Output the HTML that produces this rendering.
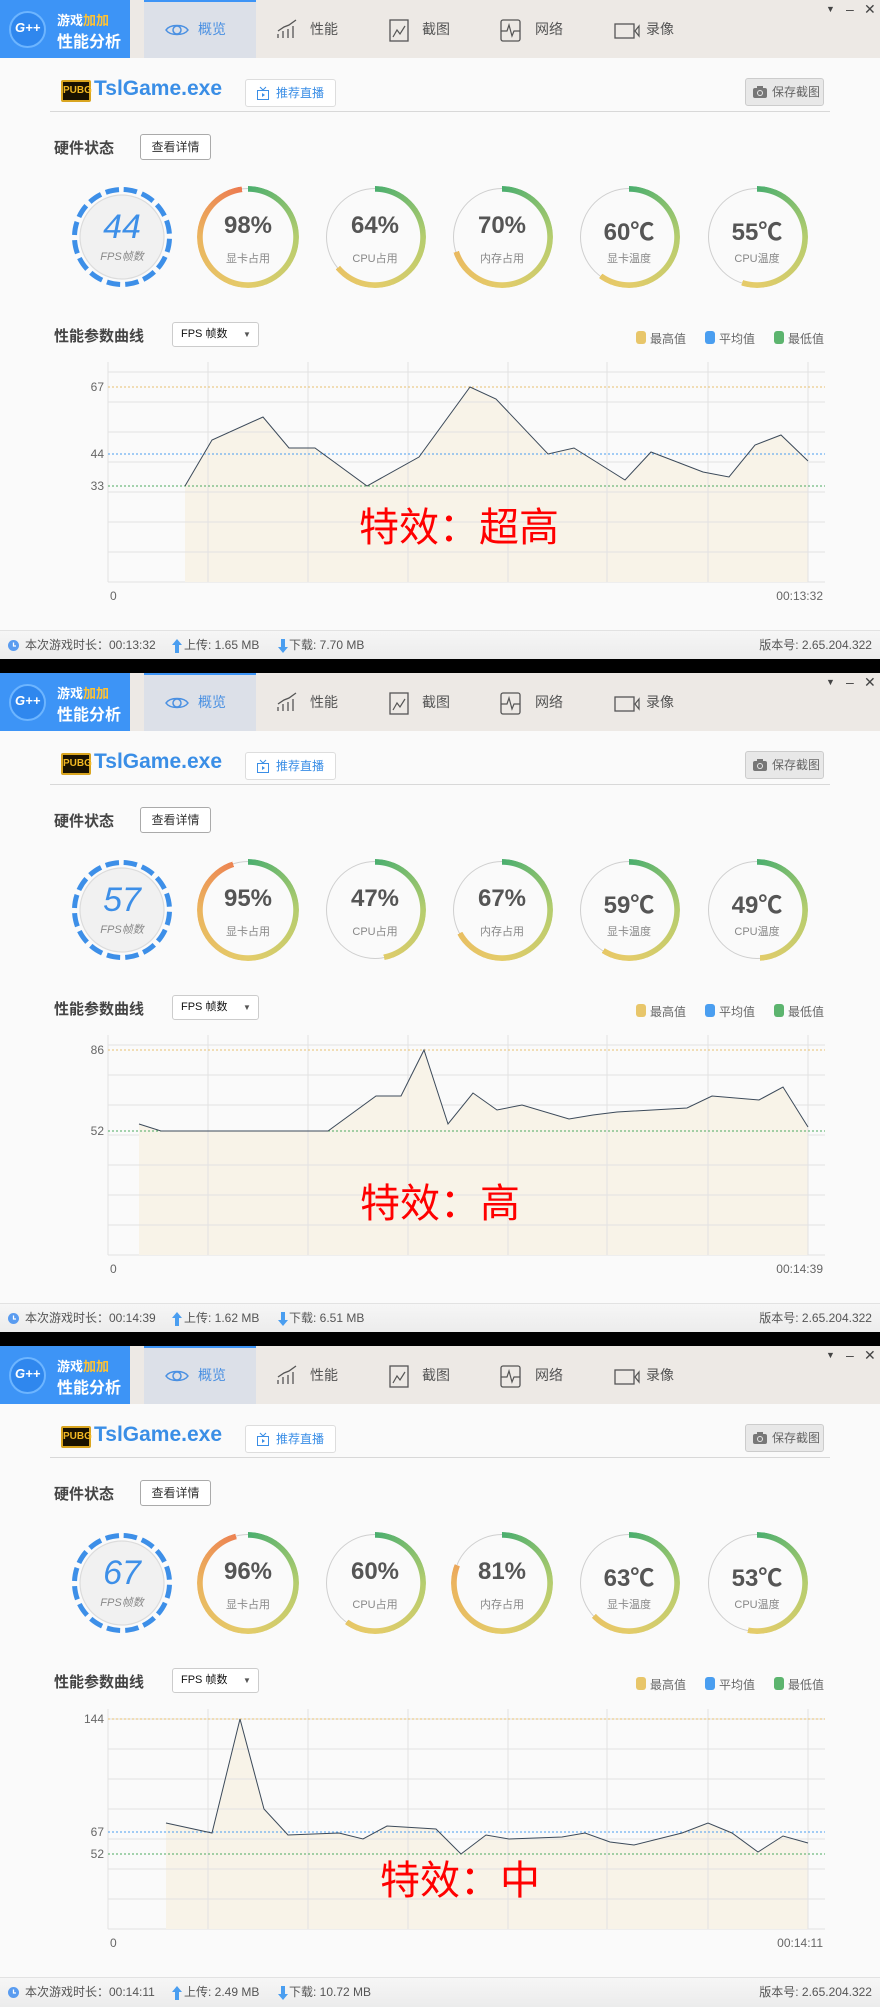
<!DOCTYPE html>
<html><head><meta charset="utf-8">
<style>
*{margin:0;padding:0;box-sizing:border-box}
body{width:880px;height:2007px;background:#000;font-family:"Liberation Sans","Noto Sans CJK SC",sans-serif;position:relative;overflow:hidden}
.p{position:absolute;left:0;width:880px;height:659px;background:#fafafa;overflow:hidden}
.a{position:absolute;white-space:nowrap}
.hdr{position:absolute;left:0;top:0;width:880px;height:58px;background:#ede9e5}
.logo{position:absolute;left:0;top:0;width:130px;height:58px;background:#3d94f6}
.tab{position:absolute;top:0;height:58px;font-size:14px;color:#555;line-height:58px}
.act{left:144px;width:112px;background:#dce0e8;border-top:2px solid #3d94f6}
.ring{position:absolute;top:186px;width:102px;height:102px}
.ring .g{position:absolute;left:2px;top:2px;width:98px;height:98px;border-radius:50%;border:1.5px solid #cfcfcf}
.ring .c{position:absolute;left:0;top:0;width:102px;height:102px;border-radius:50%;-webkit-mask:radial-gradient(circle closest-side,transparent calc(100% - 6px),#000 calc(100% - 5.5px));mask:radial-gradient(circle closest-side,transparent calc(100% - 6px),#000 calc(100% - 5.5px))}
.ring .v{position:absolute;left:0;width:102px;top:26px;text-align:center;font-size:24px;font-weight:bold;color:#555}
.ring .l{position:absolute;left:0;width:102px;top:64px;text-align:center;font-size:11px;color:#888}
.h2{font-size:15px;font-weight:bold;color:#444}
.btn{position:absolute;border:1px solid #aaa;border-radius:3px;background:#fff;font-size:12px;color:#333;text-align:center}
.lg{position:absolute;top:331px;width:10px;height:13px;border-radius:3px}
.lt{position:absolute;top:330px;font-size:12px;color:#666}
.yl{position:absolute;font-size:12px;color:#666;width:40px;text-align:right;left:64px}
.ft{position:absolute;left:0;top:630px;width:880px;height:29px;background:linear-gradient(#f6f6f6,#ececec);border-top:1px solid #e2e2e2;font-size:12px;color:#555;line-height:29px}
.red{position:absolute;font-size:40px;color:#ff0000;line-height:40px;font-family:"Noto Sans CJK SC",sans-serif}
</style></head><body>

<!-- PANEL TEMPLATE 1 -->
<div class="p" style="top:0">
 <div class="hdr">
  <div class="logo">
   <div class="a" style="left:9px;top:11px;width:37px;height:37px;border-radius:50%;background:#2f87ee;border:2px solid #6db5ff"></div>
   <div class="a" style="left:15px;top:20px;font-size:13px;font-weight:bold;font-style:italic;color:#fff">G++</div>
   <div class="a" style="left:57px;top:10px;font-size:13px;font-weight:bold;color:#fff">游戏<span style="color:#ffc233">加加</span></div>
   <div class="a" style="left:57px;top:28px;font-size:16px;font-weight:bold;color:#fff">性能分析</div>
  </div>
  <div class="tab act"><svg class="a" style="left:21px;top:20px" width="24" height="16" viewBox="0 0 24 16"><path d="M1 8C5 2 19 2 23 8C19 14 5 14 1 8Z" fill="none" stroke="#4a90e2" stroke-width="1.5"/><circle cx="12" cy="8" r="4" fill="none" stroke="#4a90e2" stroke-width="1.5"/></svg><span class="a" style="left:54px;top:-2px;color:#4a90e2">概览</span></div>
  <div class="tab" style="left:276px;width:60px"><svg class="a" style="left:0;top:18px" width="24" height="22"><path d="M2 20v-4M7 20v-7M12 20v-9M17 20v-12M2 13 8 9 13 7 20 2" fill="none" stroke="#555" stroke-width="1.3"/></svg><span class="a" style="left:34px">性能</span></div>
  <div class="tab" style="left:389px;width:60px"><svg class="a" style="left:0;top:19px" width="22" height="24"><rect x="1" y="1" width="18" height="21" fill="none" stroke="#555" stroke-width="1.3"/><path d="M4 18 8 11 11 15 16 7" fill="none" stroke="#555" stroke-width="1.2"/></svg><span class="a" style="left:33px">截图</span></div>
  <div class="tab" style="left:500px;width:60px"><svg class="a" style="left:0;top:19px" width="22" height="24"><rect x="1" y="1" width="19" height="21" rx="2" fill="none" stroke="#555" stroke-width="1.3"/><path d="M1 12h6l2-6 3 11 2-5h6" fill="none" stroke="#555" stroke-width="1.2"/></svg><span class="a" style="left:35px">网络</span></div>
  <div class="tab" style="left:614px;width:60px"><svg class="a" style="left:0;top:23px" width="28" height="16"><rect x="1" y="1" width="19" height="14" fill="none" stroke="#555" stroke-width="1.3"/><path d="M25 3 21 8 25 13Z" fill="none" stroke="#555" stroke-width="1.2"/></svg><span class="a" style="left:32px">录像</span></div>
  <div class="a" style="left:826px;top:4px;font-size:9px;color:#444">▼</div>
  <div class="a" style="left:846px;top:1px;font-size:14px;color:#444">–</div>
  <div class="a" style="left:864px;top:1px;font-size:14px;color:#444">✕</div>
 </div>
 <div class="a" style="left:61px;top:80px;width:30px;height:22px;background:#1a1200;border:2px solid #d9a520;border-radius:2px;color:#f2b822;font-size:10px;font-weight:bold;line-height:18px;text-align:center">PUBG</div>
 <div class="a" style="left:94px;top:77px;font-size:21px;font-weight:bold;color:#3a8ee6">TslGame.exe</div>
 <div class="btn" style="left:245px;top:79px;width:91px;height:28px;border-color:#ddd;line-height:26px;color:#3a8ee6;text-align:left;padding-left:30px">推荐直播</div>
 <svg class="a" style="left:256px;top:86px" width="14" height="14"><path d="M4 1 7 4 10 1" fill="none" stroke="#3a8ee6"/><rect x="1.5" y="4.5" width="11" height="9" fill="none" stroke="#3a8ee6"/><path d="M6 7v4l3-2z" fill="#3a8ee6"/></svg>
 <div class="btn" style="left:745px;top:78px;width:79px;height:28px;background:#e8e8e8;border-color:#ccc;line-height:26px;color:#666;text-align:left;padding-left:26px">保存截图</div>
 <svg class="a" style="left:753px;top:86px" width="14" height="12"><rect x="0" y="2" width="14" height="10" rx="2" fill="#777"/><rect x="4" y="0" width="6" height="3" fill="#777"/><circle cx="7" cy="7" r="3" fill="#e8e8e8"/><circle cx="7" cy="7" r="2" fill="#777"/></svg>
 <div class="a" style="left:50px;top:111px;width:780px;height:1px;background:#d8d8d8"></div>
 <div class="a h2" style="left:54px;top:137px">硬件状态</div>
 <div class="btn" style="left:140px;top:134px;width:71px;height:26px;line-height:24px">查看详情</div>

 <div class="ring" style="left:71px"><svg width="102" height="102" style="position:absolute;left:0;top:0"><circle cx="51" cy="51" r="42" fill="#f1f1f1" stroke="#dcdcdc" stroke-width="1.2"/><circle cx="51" cy="51" r="47.5" fill="none" stroke="#3d8fe8" stroke-width="5" stroke-dasharray="13.5 5.15" transform="rotate(-88 51 51)"/></svg><div class="v" style="top:22px;font-size:34px;font-weight:normal;font-style:italic;color:#3d8fe8">44</div><div class="l" style="top:62px;font-style:italic">FPS帧数</div></div>
 <div class="ring" style="left:197px"><div class="g"></div><div class="c" style="background:conic-gradient(#4aae6e 0%,#b5cd6e 25%,#e4cc6a 50%,#ebb45e 75%,#ec7a50 98%,transparent 98%)"></div><div class="v">98%</div><div class="l">显卡占用</div></div>
 <div class="ring" style="left:324px"><div class="g"></div><div class="c" style="background:conic-gradient(#4aae6e 0%,#b5cd6e 25%,#e4cc6a 50%,#e7c264 64%,transparent 64%)"></div><div class="v">64%</div><div class="l">CPU占用</div></div>
 <div class="ring" style="left:451px"><div class="g"></div><div class="c" style="background:conic-gradient(#4aae6e 0%,#b5cd6e 25%,#e4cc6a 50%,#e9b960 70%,transparent 70%)"></div><div class="v">70%</div><div class="l">内存占用</div></div>
 <div class="ring" style="left:578px"><div class="g"></div><div class="c" style="background:conic-gradient(#4aae6e 0%,#b5cd6e 25%,#e4cc6a 50%,#e6c666 60%,transparent 60%)"></div><div class="v">60℃</div><div class="l">显卡温度</div></div>
 <div class="ring" style="left:706px"><div class="g"></div><div class="c" style="background:conic-gradient(#4aae6e 0%,#b5cd6e 25%,#e4cc6a 50%,#e5ca68 55%,transparent 55%)"></div><div class="v">55℃</div><div class="l">CPU温度</div></div>

 <div class="a h2" style="left:54px;top:325px">性能参数曲线</div>
 <div class="btn" style="left:172px;top:322px;width:87px;height:25px;border-color:#ccc;line-height:23px;text-align:left;padding-left:8px;color:#111;font-size:11px">FPS 帧数<span style="position:absolute;left:70px;font-size:8px;color:#555">▼</span></div>
 <div class="lg" style="left:636px;background:#e8c66a"></div><div class="lt" style="left:650px">最高值</div>
 <div class="lg" style="left:705px;background:#4a9ef0"></div><div class="lt" style="left:719px">平均值</div>
 <div class="lg" style="left:774px;background:#5cb46e"></div><div class="lt" style="left:788px">最低值</div>

 <svg class="a" style="left:0;top:0" width="880" height="630">
  <g stroke="#e2e2e2" stroke-width="1"><path d="M108 372H825M108 402H825M108 432H825M108 462H825M108 492H825M108 522H825M108 552H825M108 582H825M108 362V582M208 362V582M308 362V582M408 362V582M508 362V582M607 362V582M708 362V582M808 362V582"/></g>
  <polygon fill="#f8f3e8" points="185,486 212,440 263,417 289,448 315,448 367,486 419,457 470,387 496,399 548,454 574,448 625,480 651,452 703,472 729,477 755,445 781,435 808,461 808,582 185,582"/>
  <g stroke="#e2e2e2"><path d="M208 362V582M308 362V582M408 362V582M508 362V582M607 362V582M708 362V582M808 362V582M108 402H825M108 432H825M108 492H825M108 522H825M108 552H825"/></g>
  <path d="M108 387H825" stroke="#e8c070" stroke-dasharray="2 2"/>
  <path d="M108 454H825" stroke="#4a9ef0" stroke-dasharray="2 2"/>
  <path d="M108 486H825" stroke="#4caa60" stroke-dasharray="2 2"/>
  <polyline fill="none" stroke="#3c4a5a" stroke-width="1" points="185,486 212,440 263,417 289,448 315,448 367,486 419,457 470,387 496,399 548,454 574,448 625,480 651,452 703,472 729,477 755,445 781,435 808,461"/>
 </svg>
 <div class="yl" style="top:380px">67</div><div class="yl" style="top:447px">44</div><div class="yl" style="top:479px">33</div>
 <div class="a" style="left:110px;top:589px;font-size:12px;color:#666">0</div>
 <div class="a" style="left:773px;top:589px;width:50px;text-align:right;font-size:12px;color:#666">00:13:32</div>
 <div class="red" style="left:359px;top:504px">特效：超高</div>
 <div class="ft">
  <svg class="a" style="left:8px;top:9px" width="11" height="11"><circle cx="5.5" cy="5.5" r="5.5" fill="#5a9cf0"/><path d="M5.5 2.5V6H8" stroke="#fff" fill="none" stroke-width="1.3"/></svg>
  <span class="a" style="left:25px">本次游戏时长：00:13:32</span>
  <svg class="a" style="left:172px;top:8px" width="10" height="14"><path d="M5 0 10 6H7V14H3V6H0Z" fill="#4a9ef0"/></svg>
  <span class="a" style="left:184px">上传: 1.65 MB</span>
  <svg class="a" style="left:278px;top:8px" width="10" height="14"><path d="M5 14 10 8H7V0H3V8H0Z" fill="#4a9ef0"/></svg>
  <span class="a" style="left:289px">下载: 7.70 MB</span>
  <span class="a" style="right:8px">版本号: 2.65.204.322</span>
 </div>
</div>

<!-- PANEL 2 -->
<div class="p" style="top:673px">
 <div class="hdr">
  <div class="logo">
   <div class="a" style="left:9px;top:11px;width:37px;height:37px;border-radius:50%;background:#2f87ee;border:2px solid #6db5ff"></div>
   <div class="a" style="left:15px;top:20px;font-size:13px;font-weight:bold;font-style:italic;color:#fff">G++</div>
   <div class="a" style="left:57px;top:10px;font-size:13px;font-weight:bold;color:#fff">游戏<span style="color:#ffc233">加加</span></div>
   <div class="a" style="left:57px;top:28px;font-size:16px;font-weight:bold;color:#fff">性能分析</div>
  </div>
  <div class="tab act"><svg class="a" style="left:21px;top:20px" width="24" height="16" viewBox="0 0 24 16"><path d="M1 8C5 2 19 2 23 8C19 14 5 14 1 8Z" fill="none" stroke="#4a90e2" stroke-width="1.5"/><circle cx="12" cy="8" r="4" fill="none" stroke="#4a90e2" stroke-width="1.5"/></svg><span class="a" style="left:54px;top:-2px;color:#4a90e2">概览</span></div>
  <div class="tab" style="left:276px;width:60px"><svg class="a" style="left:0;top:18px" width="24" height="22"><path d="M2 20v-4M7 20v-7M12 20v-9M17 20v-12M2 13 8 9 13 7 20 2" fill="none" stroke="#555" stroke-width="1.3"/></svg><span class="a" style="left:34px">性能</span></div>
  <div class="tab" style="left:389px;width:60px"><svg class="a" style="left:0;top:19px" width="22" height="24"><rect x="1" y="1" width="18" height="21" fill="none" stroke="#555" stroke-width="1.3"/><path d="M4 18 8 11 11 15 16 7" fill="none" stroke="#555" stroke-width="1.2"/></svg><span class="a" style="left:33px">截图</span></div>
  <div class="tab" style="left:500px;width:60px"><svg class="a" style="left:0;top:19px" width="22" height="24"><rect x="1" y="1" width="19" height="21" rx="2" fill="none" stroke="#555" stroke-width="1.3"/><path d="M1 12h6l2-6 3 11 2-5h6" fill="none" stroke="#555" stroke-width="1.2"/></svg><span class="a" style="left:35px">网络</span></div>
  <div class="tab" style="left:614px;width:60px"><svg class="a" style="left:0;top:23px" width="28" height="16"><rect x="1" y="1" width="19" height="14" fill="none" stroke="#555" stroke-width="1.3"/><path d="M25 3 21 8 25 13Z" fill="none" stroke="#555" stroke-width="1.2"/></svg><span class="a" style="left:32px">录像</span></div>
  <div class="a" style="left:826px;top:4px;font-size:9px;color:#444">▼</div>
  <div class="a" style="left:846px;top:1px;font-size:14px;color:#444">–</div>
  <div class="a" style="left:864px;top:1px;font-size:14px;color:#444">✕</div>
 </div>
 <div class="a" style="left:61px;top:80px;width:30px;height:22px;background:#1a1200;border:2px solid #d9a520;border-radius:2px;color:#f2b822;font-size:10px;font-weight:bold;line-height:18px;text-align:center">PUBG</div>
 <div class="a" style="left:94px;top:77px;font-size:21px;font-weight:bold;color:#3a8ee6">TslGame.exe</div>
 <div class="btn" style="left:245px;top:79px;width:91px;height:28px;border-color:#ddd;line-height:26px;color:#3a8ee6;text-align:left;padding-left:30px">推荐直播</div>
 <svg class="a" style="left:256px;top:86px" width="14" height="14"><path d="M4 1 7 4 10 1" fill="none" stroke="#3a8ee6"/><rect x="1.5" y="4.5" width="11" height="9" fill="none" stroke="#3a8ee6"/><path d="M6 7v4l3-2z" fill="#3a8ee6"/></svg>
 <div class="btn" style="left:745px;top:78px;width:79px;height:28px;background:#e8e8e8;border-color:#ccc;line-height:26px;color:#666;text-align:left;padding-left:26px">保存截图</div>
 <svg class="a" style="left:753px;top:86px" width="14" height="12"><rect x="0" y="2" width="14" height="10" rx="2" fill="#777"/><rect x="4" y="0" width="6" height="3" fill="#777"/><circle cx="7" cy="7" r="3" fill="#e8e8e8"/><circle cx="7" cy="7" r="2" fill="#777"/></svg>
 <div class="a" style="left:50px;top:111px;width:780px;height:1px;background:#d8d8d8"></div>
 <div class="a h2" style="left:54px;top:137px">硬件状态</div>
 <div class="btn" style="left:140px;top:134px;width:71px;height:26px;line-height:24px">查看详情</div>

 <div class="ring" style="left:71px"><svg width="102" height="102" style="position:absolute;left:0;top:0"><circle cx="51" cy="51" r="42" fill="#f1f1f1" stroke="#dcdcdc" stroke-width="1.2"/><circle cx="51" cy="51" r="47.5" fill="none" stroke="#3d8fe8" stroke-width="5" stroke-dasharray="13.5 5.15" transform="rotate(-88 51 51)"/></svg><div class="v" style="top:22px;font-size:34px;font-weight:normal;font-style:italic;color:#3d8fe8">57</div><div class="l" style="top:62px;font-style:italic">FPS帧数</div></div>
 <div class="ring" style="left:197px"><div class="g"></div><div class="c" style="background:conic-gradient(#4aae6e 0%,#b5cd6e 25%,#e4cc6a 50%,#ebb45e 75%,#ec8452 95%,transparent 95%)"></div><div class="v">95%</div><div class="l">显卡占用</div></div>
 <div class="ring" style="left:324px"><div class="g"></div><div class="c" style="background:conic-gradient(#4aae6e 0%,#b5cd6e 25%,#e0cc6a 47%,transparent 47%)"></div><div class="v">47%</div><div class="l">CPU占用</div></div>
 <div class="ring" style="left:451px"><div class="g"></div><div class="c" style="background:conic-gradient(#4aae6e 0%,#b5cd6e 25%,#e4cc6a 50%,#e8be62 67%,transparent 67%)"></div><div class="v">67%</div><div class="l">内存占用</div></div>
 <div class="ring" style="left:578px"><div class="g"></div><div class="c" style="background:conic-gradient(#4aae6e 0%,#b5cd6e 25%,#e4cc6a 50%,#e6c766 59%,transparent 59%)"></div><div class="v">59℃</div><div class="l">显卡温度</div></div>
 <div class="ring" style="left:706px"><div class="g"></div><div class="c" style="background:conic-gradient(#4aae6e 0%,#b5cd6e 25%,#e2cc6a 49%,transparent 49%)"></div><div class="v">49℃</div><div class="l">CPU温度</div></div>

 <div class="a h2" style="left:54px;top:325px">性能参数曲线</div>
 <div class="btn" style="left:172px;top:322px;width:87px;height:25px;border-color:#ccc;line-height:23px;text-align:left;padding-left:8px;color:#111;font-size:11px">FPS 帧数<span style="position:absolute;left:70px;font-size:8px;color:#555">▼</span></div>
 <div class="lg" style="left:636px;background:#e8c66a"></div><div class="lt" style="left:650px">最高值</div>
 <div class="lg" style="left:705px;background:#4a9ef0"></div><div class="lt" style="left:719px">平均值</div>
 <div class="lg" style="left:774px;background:#5cb46e"></div><div class="lt" style="left:788px">最低值</div>

 <svg class="a" style="left:0;top:0" width="880" height="630">
  <g stroke="#e2e2e2" stroke-width="1"><path d="M108 372H825M108 402H825M108 432H825M108 462H825M108 492H825M108 522H825M108 552H825M108 582H825M108 362V582M208 362V582M308 362V582M408 362V582M508 362V582M607 362V582M708 362V582M808 362V582"/></g>
  <polygon fill="#f8f3e8" points="139,451 161,458 328,458 376,423 401,423 424,377 448,451 473,420 497,437 522,432 569,446 593,442 617,439 687,435 712,423 759,427 783,414 808,454 808,582 139,582"/>
  <g stroke="#e2e2e2"><path d="M208 362V582M308 362V582M408 362V582M508 362V582M607 362V582M708 362V582M808 362V582M108 492H825M108 522H825M108 552H825"/></g>
  <path d="M108 377H825" stroke="#e8c070" stroke-dasharray="2 2"/>
  <path d="M108 458H825" stroke="#4caa60" stroke-dasharray="2 2"/>
  <polyline fill="none" stroke="#3c4a5a" stroke-width="1" points="139,451 161,458 328,458 376,423 401,423 424,377 448,451 473,420 497,437 522,432 569,446 593,442 617,439 687,435 712,423 759,427 783,414 808,454"/>
 </svg>
 <div class="yl" style="top:370px">86</div><div class="yl" style="top:451px">52</div>
 <div class="a" style="left:110px;top:589px;font-size:12px;color:#666">0</div>
 <div class="a" style="left:773px;top:589px;width:50px;text-align:right;font-size:12px;color:#666">00:14:39</div>
 <div class="red" style="left:360px;top:507px">特效：高</div>
 <div class="ft">
  <svg class="a" style="left:8px;top:9px" width="11" height="11"><circle cx="5.5" cy="5.5" r="5.5" fill="#5a9cf0"/><path d="M5.5 2.5V6H8" stroke="#fff" fill="none" stroke-width="1.3"/></svg>
  <span class="a" style="left:25px">本次游戏时长：00:14:39</span>
  <svg class="a" style="left:172px;top:8px" width="10" height="14"><path d="M5 0 10 6H7V14H3V6H0Z" fill="#4a9ef0"/></svg>
  <span class="a" style="left:184px">上传: 1.62 MB</span>
  <svg class="a" style="left:278px;top:8px" width="10" height="14"><path d="M5 14 10 8H7V0H3V8H0Z" fill="#4a9ef0"/></svg>
  <span class="a" style="left:289px">下载: 6.51 MB</span>
  <span class="a" style="right:8px">版本号: 2.65.204.322</span>
 </div>
</div>

<!-- PANEL 3 -->
<div class="p" style="top:1346px;height:661px">
 <div class="hdr">
  <div class="logo">
   <div class="a" style="left:9px;top:11px;width:37px;height:37px;border-radius:50%;background:#2f87ee;border:2px solid #6db5ff"></div>
   <div class="a" style="left:15px;top:20px;font-size:13px;font-weight:bold;font-style:italic;color:#fff">G++</div>
   <div class="a" style="left:57px;top:10px;font-size:13px;font-weight:bold;color:#fff">游戏<span style="color:#ffc233">加加</span></div>
   <div class="a" style="left:57px;top:28px;font-size:16px;font-weight:bold;color:#fff">性能分析</div>
  </div>
  <div class="tab act"><svg class="a" style="left:21px;top:20px" width="24" height="16" viewBox="0 0 24 16"><path d="M1 8C5 2 19 2 23 8C19 14 5 14 1 8Z" fill="none" stroke="#4a90e2" stroke-width="1.5"/><circle cx="12" cy="8" r="4" fill="none" stroke="#4a90e2" stroke-width="1.5"/></svg><span class="a" style="left:54px;top:-2px;color:#4a90e2">概览</span></div>
  <div class="tab" style="left:276px;width:60px"><svg class="a" style="left:0;top:18px" width="24" height="22"><path d="M2 20v-4M7 20v-7M12 20v-9M17 20v-12M2 13 8 9 13 7 20 2" fill="none" stroke="#555" stroke-width="1.3"/></svg><span class="a" style="left:34px">性能</span></div>
  <div class="tab" style="left:389px;width:60px"><svg class="a" style="left:0;top:19px" width="22" height="24"><rect x="1" y="1" width="18" height="21" fill="none" stroke="#555" stroke-width="1.3"/><path d="M4 18 8 11 11 15 16 7" fill="none" stroke="#555" stroke-width="1.2"/></svg><span class="a" style="left:33px">截图</span></div>
  <div class="tab" style="left:500px;width:60px"><svg class="a" style="left:0;top:19px" width="22" height="24"><rect x="1" y="1" width="19" height="21" rx="2" fill="none" stroke="#555" stroke-width="1.3"/><path d="M1 12h6l2-6 3 11 2-5h6" fill="none" stroke="#555" stroke-width="1.2"/></svg><span class="a" style="left:35px">网络</span></div>
  <div class="tab" style="left:614px;width:60px"><svg class="a" style="left:0;top:23px" width="28" height="16"><rect x="1" y="1" width="19" height="14" fill="none" stroke="#555" stroke-width="1.3"/><path d="M25 3 21 8 25 13Z" fill="none" stroke="#555" stroke-width="1.2"/></svg><span class="a" style="left:32px">录像</span></div>
  <div class="a" style="left:826px;top:4px;font-size:9px;color:#444">▼</div>
  <div class="a" style="left:846px;top:1px;font-size:14px;color:#444">–</div>
  <div class="a" style="left:864px;top:1px;font-size:14px;color:#444">✕</div>
 </div>
 <div class="a" style="left:61px;top:80px;width:30px;height:22px;background:#1a1200;border:2px solid #d9a520;border-radius:2px;color:#f2b822;font-size:10px;font-weight:bold;line-height:18px;text-align:center">PUBG</div>
 <div class="a" style="left:94px;top:77px;font-size:21px;font-weight:bold;color:#3a8ee6">TslGame.exe</div>
 <div class="btn" style="left:245px;top:79px;width:91px;height:28px;border-color:#ddd;line-height:26px;color:#3a8ee6;text-align:left;padding-left:30px">推荐直播</div>
 <svg class="a" style="left:256px;top:86px" width="14" height="14"><path d="M4 1 7 4 10 1" fill="none" stroke="#3a8ee6"/><rect x="1.5" y="4.5" width="11" height="9" fill="none" stroke="#3a8ee6"/><path d="M6 7v4l3-2z" fill="#3a8ee6"/></svg>
 <div class="btn" style="left:745px;top:78px;width:79px;height:28px;background:#e8e8e8;border-color:#ccc;line-height:26px;color:#666;text-align:left;padding-left:26px">保存截图</div>
 <svg class="a" style="left:753px;top:86px" width="14" height="12"><rect x="0" y="2" width="14" height="10" rx="2" fill="#777"/><rect x="4" y="0" width="6" height="3" fill="#777"/><circle cx="7" cy="7" r="3" fill="#e8e8e8"/><circle cx="7" cy="7" r="2" fill="#777"/></svg>
 <div class="a" style="left:50px;top:111px;width:780px;height:1px;background:#d8d8d8"></div>
 <div class="a h2" style="left:54px;top:137px">硬件状态</div>
 <div class="btn" style="left:140px;top:134px;width:71px;height:26px;line-height:24px">查看详情</div>

 <div class="ring" style="left:71px"><svg width="102" height="102" style="position:absolute;left:0;top:0"><circle cx="51" cy="51" r="42" fill="#f1f1f1" stroke="#dcdcdc" stroke-width="1.2"/><circle cx="51" cy="51" r="47.5" fill="none" stroke="#3d8fe8" stroke-width="5" stroke-dasharray="13.5 5.15" transform="rotate(-88 51 51)"/></svg><div class="v" style="top:22px;font-size:34px;font-weight:normal;font-style:italic;color:#3d8fe8">67</div><div class="l" style="top:62px;font-style:italic">FPS帧数</div></div>
 <div class="ring" style="left:197px"><div class="g"></div><div class="c" style="background:conic-gradient(#4aae6e 0%,#b5cd6e 25%,#e4cc6a 50%,#ebb45e 75%,#ec8252 96%,transparent 96%)"></div><div class="v">96%</div><div class="l">显卡占用</div></div>
 <div class="ring" style="left:324px"><div class="g"></div><div class="c" style="background:conic-gradient(#4aae6e 0%,#b5cd6e 25%,#e4cc6a 50%,#e6c666 60%,transparent 60%)"></div><div class="v">60%</div><div class="l">CPU占用</div></div>
 <div class="ring" style="left:451px"><div class="g"></div><div class="c" style="background:conic-gradient(#4aae6e 0%,#b5cd6e 25%,#e4cc6a 50%,#ebb45e 75%,#eba65a 81%,transparent 81%)"></div><div class="v">81%</div><div class="l">内存占用</div></div>
 <div class="ring" style="left:578px"><div class="g"></div><div class="c" style="background:conic-gradient(#4aae6e 0%,#b5cd6e 25%,#e4cc6a 50%,#e6c365 63%,transparent 63%)"></div><div class="v">63℃</div><div class="l">显卡温度</div></div>
 <div class="ring" style="left:706px"><div class="g"></div><div class="c" style="background:conic-gradient(#4aae6e 0%,#b5cd6e 25%,#e4cc6a 50%,#e5cb69 53%,transparent 53%)"></div><div class="v">53℃</div><div class="l">CPU温度</div></div>

 <div class="a h2" style="left:54px;top:325px">性能参数曲线</div>
 <div class="btn" style="left:172px;top:322px;width:87px;height:25px;border-color:#ccc;line-height:23px;text-align:left;padding-left:8px;color:#111;font-size:11px">FPS 帧数<span style="position:absolute;left:70px;font-size:8px;color:#555">▼</span></div>
 <div class="lg" style="left:636px;background:#e8c66a"></div><div class="lt" style="left:650px">最高值</div>
 <div class="lg" style="left:705px;background:#4a9ef0"></div><div class="lt" style="left:719px">平均值</div>
 <div class="lg" style="left:774px;background:#5cb46e"></div><div class="lt" style="left:788px">最低值</div>

 <svg class="a" style="left:0;top:0" width="880" height="630">
  <g stroke="#e2e2e2" stroke-width="1"><path d="M108 373H825M108 403H825M108 433H825M108 463H825M108 493H825M108 523H825M108 553H825M108 583H825M108 363V583M208 363V583M308 363V583M408 363V583M508 363V583M607 363V583M708 363V583M808 363V583"/></g>
  <polygon fill="#f8f3e8" points="166,477 212,487 240,373 264,463 288,489 339,487 363,493 387,480 436,483 461,508 486,489 509,493 562,491 585,487 610,496 634,499 682,487 708,477 732,487 758,506 783,490 808,497 808,583 166,583"/>
  <g stroke="#e2e2e2"><path d="M208 363V583M308 363V583M408 363V583M508 363V583M607 363V583M708 363V583M808 363V583M108 403H825M108 433H825M108 463H825M108 493H825M108 523H825M108 553H825"/></g>
  <path d="M108 373H825" stroke="#e8c070" stroke-dasharray="2 2"/>
  <path d="M108 486H825" stroke="#4a9ef0" stroke-dasharray="2 2"/>
  <path d="M108 508H825" stroke="#4caa60" stroke-dasharray="2 2"/>
  <polyline fill="none" stroke="#3c4a5a" stroke-width="1" points="166,477 212,487 240,373 264,463 288,489 339,487 363,493 387,480 436,483 461,508 486,489 509,493 562,491 585,487 610,496 634,499 682,487 708,477 732,487 758,506 783,490 808,497"/>
 </svg>
 <div class="yl" style="top:366px">144</div><div class="yl" style="top:479px">67</div><div class="yl" style="top:501px">52</div>
 <div class="a" style="left:110px;top:590px;font-size:12px;color:#666">0</div>
 <div class="a" style="left:773px;top:590px;width:50px;text-align:right;font-size:12px;color:#666">00:14:11</div>
 <div class="red" style="left:380px;top:511px">特效：中</div>
 <div class="ft" style="top:631px;height:30px">
  <svg class="a" style="left:8px;top:9px" width="11" height="11"><circle cx="5.5" cy="5.5" r="5.5" fill="#5a9cf0"/><path d="M5.5 2.5V6H8" stroke="#fff" fill="none" stroke-width="1.3"/></svg>
  <span class="a" style="left:25px">本次游戏时长：00:14:11</span>
  <svg class="a" style="left:172px;top:8px" width="10" height="14"><path d="M5 0 10 6H7V14H3V6H0Z" fill="#4a9ef0"/></svg>
  <span class="a" style="left:184px">上传: 2.49 MB</span>
  <svg class="a" style="left:278px;top:8px" width="10" height="14"><path d="M5 14 10 8H7V0H3V8H0Z" fill="#4a9ef0"/></svg>
  <span class="a" style="left:289px">下载: 10.72 MB</span>
  <span class="a" style="right:8px">版本号: 2.65.204.322</span>
 </div>
</div>
</body></html>
